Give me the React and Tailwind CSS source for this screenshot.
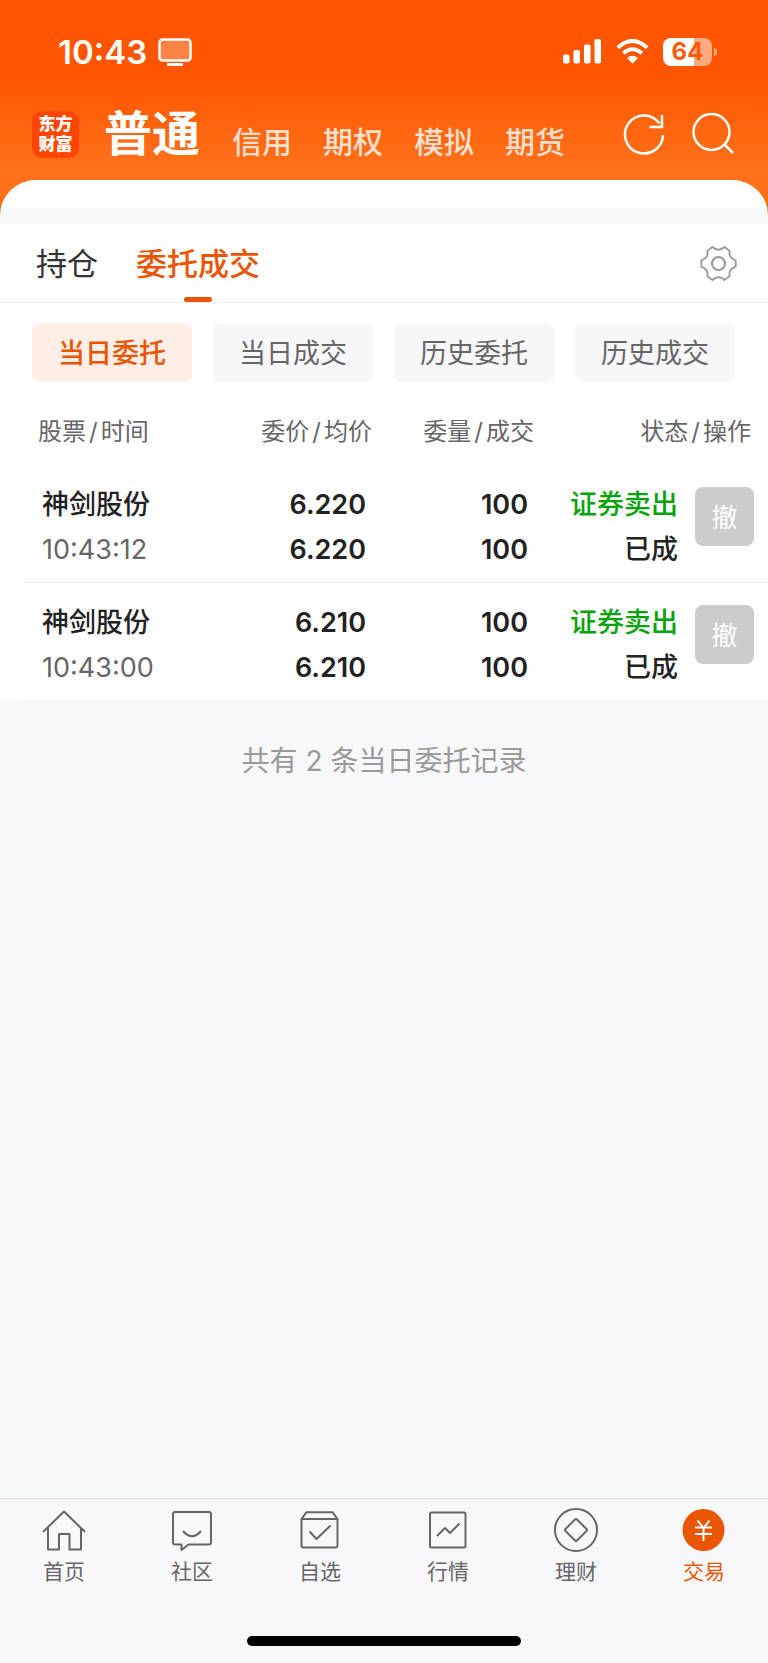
import { useState } from 'react';

const markets = ['信用', '期权', '模拟', '期货'];

const filters = ['当日委托', '当日成交', '历史委托', '历史成交'];

const orders = [
  { name: '神剑股份', time: '10:43:12', price: '6.220', avgPrice: '6.220', amount: '100', filled: '100', side: '证券卖出', status: '已成' },
  { name: '神剑股份', time: '10:43:00', price: '6.210', avgPrice: '6.210', amount: '100', filled: '100', side: '证券卖出', status: '已成' }
];

const navItems = [
  {
    label: '首页',
    icon: (
      <>
        <path d="M1 23 L22 2.500 L43 23" />
        <path d="M6 19 V40.500 H17 V25 H27.500 V40.500 H39 V19" />
      </>
    )
  },
  {
    label: '社区',
    icon: (
      <>
        <path d="M5 3 H39 Q41 3 41 5 V33.500 Q41 35.500 39 35.500 H18.500 L11.500 41 V35.500 H5 Q3 35.500 3 33.500 V5 Q3 3 5 3 Z" />
        <path d="M13 22 Q22 32.500 31 22" />
      </>
    )
  },
  {
    label: '自选',
    icon: (
      <>
        <path d="M3.500 10 L8.500 3.200 H34.500 L39.500 10 V36.500 Q39.500 38.500 37.500 38.500 H5.500 Q3.500 38.500 3.500 36.500 Z M3.500 10 H39.500" />
        <path d="M11.500 22.500 L18.500 30 L32.500 16.500" />
      </>
    )
  },
  {
    label: '行情',
    icon: (
      <>
        <rect x="4" y="3.500" width="35.500" height="35" rx="1.500" />
        <path d="M11 27 L19 19 L24 24 L33.500 14.500" />
      </>
    )
  },
  {
    label: '理财',
    icon: (
      <>
        <circle cx="22" cy="21" r="21" />
        <path d="M21 10.500 Q22 9.500 23 10.500 L32.500 20 Q33.500 21 32.500 22 L23 31.500 Q22 32.500 21 31.500 L11.500 22 Q10.500 21 11.500 20 Z" />
      </>
    )
  },
  {
    label: '交易',
    active: true,
    icon: (
      <>
        <circle cx="21.500" cy="21" r="21" fill="#ea5504" stroke="none" />
        <path stroke="#fff" d="M15.500 11.500 L21.500 19 L27.500 11.500 M21.500 19 V32 M13 18.500 H30 M13 25 H30" />
      </>
    )
  }
];

const StatusBar = () => (
  <div className="flex h-[102px] items-center justify-between pl-[58px] pr-[51px] pt-px text-white">
    <div className="flex items-center gap-[11px]">
      <span className="text-[33px] font-semibold leading-10">10:43</span>
      <svg width="34" height="28" viewBox="0 0 34 28">
        <rect x="1.500" y="1.500" width="31" height="21" rx="3" fill="#ff8345" stroke="#fff" strokeWidth="2.500" />
        <rect x="9" y="25" width="16" height="3" rx="1" fill="#fff" />
      </svg>
    </div>
    <div className="flex items-center">
      <svg width="39" height="25" viewBox="0 0 39 25" fill="#fff">
        <rect x="0" y="15.500" width="6.500" height="9" rx="1.800" />
        <rect x="10.500" y="11" width="6.500" height="13.500" rx="1.800" />
        <rect x="21" y="5.500" width="6.500" height="19" rx="1.800" />
        <rect x="31.500" y="0" width="6.500" height="24.500" rx="1.800" />
      </svg>
      <svg className="ml-[14px]" width="33" height="25" viewBox="0 0 33 25">
        <path d="M1.800 8.800 Q16.500 -4.800 31.200 8.800" fill="none" stroke="#fff" strokeWidth="4" />
        <path d="M7.200 14.300 Q16.500 6.200 25.800 14.300" fill="none" stroke="#fff" strokeWidth="4" />
        <path d="M11 19 Q16.500 14.500 22 19 L16.500 24.800 Z" fill="#fff" />
      </svg>
      <div className="ml-[14px] flex h-7 w-[49px] items-center justify-center rounded-lg bg-[linear-gradient(90deg,#fff_64%,#ffaa80_64%)] text-2xl font-bold text-[#ff5a06]">
        64
      </div>
      <div className="ml-0.5 h-2 w-[3px] rounded-r-full bg-[#ffaa80]" />
    </div>
  </div>
);

const Header = () => (
  <header className="flex h-[78px] items-center pb-3.5 pl-8 pr-[34px] text-white">
    <div className="flex size-[47px] shrink-0 flex-col items-center justify-center rounded-[10px] bg-[#ff4500] text-[17px] font-black leading-5">
      <span>东方</span>
      <span>财富</span>
    </div>
    <nav className="ml-[25px] flex flex-1 items-center">
      <a href="#normal" className="text-5xl font-bold">普通</a>
      <div className="ml-8 mt-4 flex gap-[31px]">
        {markets.map((market) => (
          <a key={market} href="#market" className="text-[30px] font-medium leading-9 text-[#ffdfce]">{market}</a>
        ))}
      </div>
    </nav>
    <button type="button" aria-label="刷新">
      <svg width="42" height="42" viewBox="0 0 42 42" fill="none" stroke="#fff" strokeWidth="2.500">
        <path d="M40 22 A19 19 0 1 1 36.500 10.500" />
        <path d="M39 2 V14 H26.500" />
      </svg>
    </button>
    <button type="button" aria-label="搜索" className="ml-[27px]">
      <svg width="42" height="42" viewBox="0 0 42 42" fill="none" stroke="#fff" strokeWidth="2.500">
        <circle cx="19.500" cy="19" r="18" />
        <path d="M32 31 L41 40" />
      </svg>
    </button>
  </header>
);

const Tabs = () => (
  <div className="flex h-[79px] items-stretch border-b border-[#f0f0f2] bg-white pl-9 pr-[31px] text-[31px]">
    <button type="button" className="pt-0.5 text-[#333]">持仓</button>
    <button type="button" className="relative ml-[38px] pt-0.5 font-medium text-[#ea5504]">
      委托成交
      <span className="absolute bottom-0 left-1/2 h-[5px] w-7 -translate-x-1/2 rounded-sm bg-[#ea5504]" />
    </button>
    <button type="button" aria-label="设置" className="ml-auto">
      <svg width="37" height="37" viewBox="-18.500 -18.500 37 37" fill="none" stroke="#999" strokeWidth="1.800" strokeLinejoin="round">
        <path d="M17.200 -3.200 Q9.500 -6 11.200 -12.600 L6 -16.500 Q0 -11 -6 -16.500 L-11.200 -12.600 Q-9.500 -6 -17.200 -3.200 V3.200 Q-9.500 6 -11.200 12.600 L-6 16.500 Q0 11 6 16.500 L11.200 12.600 Q9.500 6 17.200 3.200 Z" />
        <circle r="6.500" strokeWidth="2.200" />
      </svg>
    </button>
  </div>
);

const Slash = () => <span className="mx-[3px]">/</span>;

const OrderTable = () => (
  <div className="bg-white pl-5">
    <table className="w-full table-fixed border-collapse">
      <colgroup>
        <col />
        <col className="w-[171px]" />
        <col className="w-[162px]" />
        <col className="w-[144px]" />
        <col className="w-[90px]" />
      </colgroup>
      <thead>
        <tr className="text-right text-2xl leading-9 text-[#666]">
          <th className="pb-[15px] pl-[18px] pt-8 text-left font-normal">股票<Slash />时间</th>
          <th className="pb-[15px] pt-8 font-normal">委价<Slash />均价</th>
          <th className="pb-[15px] pt-8 font-normal">委量<Slash />成交</th>
          <th colSpan={2} className="pb-[15px] pr-[17px] pt-8 font-normal">状态<Slash />操作</th>
        </tr>
      </thead>
      <tbody>
        {orders.map((order) => (
          <tr key={order.time} className="border-b border-[#f3f3f5] text-right align-top text-[27px] font-semibold leading-[45px] text-[#222]">
            <td className="pb-2.5 pl-[22px] pt-[17px] text-left">
              <div className="font-medium">{order.name}</div>
              <div className="font-normal text-[#666]">{order.time}</div>
            </td>
            <td className="pb-2.5 pr-1.5 pt-[17px]">
              <div>{order.price}</div>
              <div>{order.avgPrice}</div>
            </td>
            <td className="pb-2.5 pr-1.5 pt-[17px]">
              <div>{order.amount}</div>
              <div>{order.filled}</div>
            </td>
            <td className="pb-2.5 pt-[17px] font-medium">
              <div className="text-[#07a30b]">{order.side}</div>
              <div>{order.status}</div>
            </td>
            <td className="pr-3.5 pt-[22px]">
              <button type="button" className="ml-auto block size-[59px] rounded-lg bg-[#ccc] pt-0.5 text-[26px] font-normal text-white">撤</button>
            </td>
          </tr>
        ))}
      </tbody>
    </table>
  </div>
);

const BottomNav = () => (
  <footer className="border-t border-[#dedee0] bg-[#f8f8fb] pb-[17px]">
    <nav className="grid h-[137px] grid-cols-6 items-start pt-[9px]">
      {navItems.map((item) => (
        <a
          key={item.label}
          href="#nav"
          className={`flex flex-col items-center gap-1 text-[21px] leading-8 ${item.active ? 'text-[#ea5504]' : 'text-[#666]'}`}
        >
          <svg width="46" height="44" viewBox="-1 -1 46 44" fill="none" stroke="currentColor" strokeWidth="2" strokeLinejoin="round">
            {item.icon}
          </svg>
          {item.label}
        </a>
      ))}
    </nav>
    <div className="mx-auto h-2.5 w-[274px] rounded-full bg-black" />
  </footer>
);

const App = () => {
  const [activeFilter, setActiveFilter] = useState('当日委托');

  return (
    <div
      lang="zh-CN"
      className="flex min-h-screen flex-col bg-[linear-gradient(#ff5500_75px,#ff7019_165px)] font-['Inter','Noto_Sans_CJK_SC',sans-serif]"
    >
      <StatusBar />
      <Header />

      <main className="flex flex-1 flex-col overflow-hidden rounded-t-[36px] bg-[#f7f8fa]">
        <div className="mb-4 h-7 bg-white" />
        <Tabs />

        {/* Order filters */}
        <div className="flex gap-[21px] bg-white pl-8 pr-[33px] pt-5">
          {filters.map((filter) => (
            <button
              key={filter}
              type="button"
              onClick={() => setActiveFilter(filter)}
              className={`h-[59px] flex-1 rounded-lg pt-[3px] text-[27px] ${
                activeFilter === filter
                  ? 'bg-[#feeee6] font-medium text-[#ea5504]'
                  : 'bg-[#f7f7fa] text-[#666]'
              }`}
            >
              {filter}
            </button>
          ))}
        </div>

        <OrderTable />

        <p className="pt-[39px] text-center text-[28px] leading-[42px] text-[#999]">
          共有<span className="mx-2">{orders.length}</span>条当日委托记录
        </p>
      </main>

      <BottomNav />
    </div>
  );
};

export default App;
